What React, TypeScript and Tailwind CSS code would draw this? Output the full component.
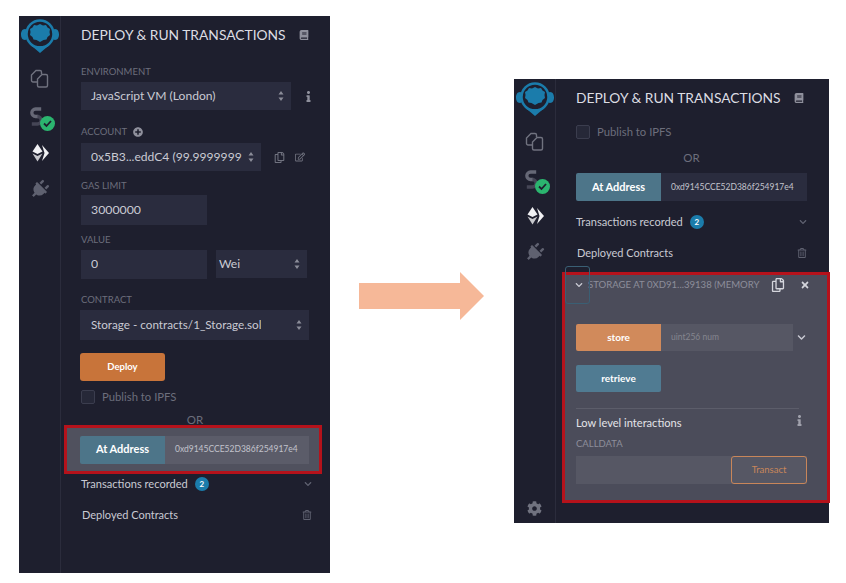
import { ReactNode } from "react";
import { FaBook, FaChevronDown, FaCog, FaInfo, FaPlug, FaPlusCircle, FaRegCopy, FaRegEdit, FaRegTrashAlt, FaTimes } from "react-icons/fa";

function Logo() {
  return (
    <svg width="38" height="34" viewBox="0 0 38 34">
      <circle cx="19" cy="15" r="13.500" fill="none" stroke="#1b7cab" strokeWidth="2.500" />
      <path d="M4 10C1 10 0 13 0 15.500S1 21 4 21c1.500 0 2-1 2-3v-5c0-2-.5-3-2-3zM34 10c3 0 4 3 4 5.500S37 21 34 21c-1.500 0-2-1-2-3v-5c0-2 .5-3 2-3z" fill="#1b7cab" />
      <path d="M19 5l3 1.500 3-.5 1.500 2.500 2.500 1.500-.5 3 .5 3-2.500 2-1 2.500-3 .5L19 23l-3.500-2-3-.5-1-2.500L9 16l.5-3-.5-3 2.500-1.500L13 6l3 .5z" fill="#1b7cab" />
      <path d="M9 25.500q10 3.500 20 0L19 34z" fill="#1b7cab" />
    </svg>
  );
}

function FilesIcon() {
  return (
    <svg width="19" height="19" viewBox="0 0 19 19" fill="none" stroke="#70727f" strokeWidth="1.400">
      <path d="M7 13H3a1.500 1.500 0 0 1-1.500-1.500V6L6 1.500h4A1.500 1.500 0 0 1 11.500 3v2" />
      <path d="M9 18a1.500 1.500 0 0 1-1.500-1.500V10L12 5.500h4A1.500 1.500 0 0 1 17.500 7v9.500A1.500 1.500 0 0 1 16 18z" />
    </svg>
  );
}

function CompileIcon() {
  return (
    <div className="relative w-[24px] h-[24px] mt-1">
      <svg width="15" height="21" viewBox="0 0 16 22" fill="none" strokeWidth="3.500" className="ml-[1px]">
        <path d="M13 3H7a4 4 0 0 0 0 8h3" stroke="#666876" />
        <path d="M3 19h6a4 4 0 0 0 0-8" stroke="#454656" />
      </svg>
      <div className="absolute right-[-3px] bottom-[-1px] w-[15px] h-[15px] rounded-full bg-[#2bb56f] flex items-center justify-center">
        <svg width="9" height="9" viewBox="0 0 9 9" fill="none" stroke="#1e1f2e" strokeWidth="1.800">
          <path d="M1 4.500l2.500 2.500L8 2" />
        </svg>
      </div>
    </div>
  );
}

function DeployIcon() {
  return (
    <svg width="18" height="18" viewBox="0 0 18 18" fill="#f1f1f4">
      <path d="M6.500 0l5 7.500-5 2.500-5-2.500z" />
      <path d="M1.500 9.500l5 2.500 5-2.500-5 8z" opacity=".8" />
      <path d="M11 1l7 8-7 8 2.500-8z" />
    </svg>
  );
}

function Sidebar({ gear }: { gear?: boolean }) {
  return (
    <div className="w-[42px] shrink-0 border-r border-[#2b2c3c] flex flex-col items-center">
      <div className="h-[38px] mt-[1px] flex items-center justify-center">
        <Logo />
      </div>
      <div className="mt-[5px] h-[37px] flex items-center justify-center"><FilesIcon /></div>
      <div className="h-[37px] flex items-center justify-center"><CompileIcon /></div>
      <div className="h-[37px] flex items-center justify-center"><DeployIcon /></div>
      <div className="h-[37px] flex items-center justify-center"><FaPlug className="text-[#5f6170] text-[19px] rotate-45" /></div>
      {gear && <FaCog className="mt-auto mb-[7px] text-[#70727f] text-[15px]" />}
    </div>
  );
}

function UpDown() {
  return (
    <svg width="6" height="10" viewBox="0 0 6 10" fill="#8b8d99">
      <path d="M3 0l2.500 3.500h-5zM3 10L.500 6.500h5z" />
    </svg>
  );
}

function Label({ children, className }: { children: ReactNode; className?: string }) {
  return <div className={"text-[9.500px] leading-[12px] uppercase text-[#6c6e7c] " + (className ?? "")}>{children}</div>;
}

function Field({ children, className, arrow }: { children: ReactNode; className?: string; arrow?: boolean }) {
  return (
    <div className={"bg-[#2a2c3e] text-[#c9cad3] flex items-center justify-between shrink-0 overflow-hidden " + (className ?? "")}>
      <span className="whitespace-nowrap overflow-hidden">{children}</span>
      {arrow && <span className="shrink-0 ml-1"><UpDown /></span>}
    </div>
  );
}

function Title() {
  return (
    <div className="flex items-center h-[20px] w-[228px] justify-between">
      <span className="text-[#dcdde3] text-[13.800px] whitespace-nowrap">DEPLOY &amp; RUN TRANSACTIONS</span>
      <FaBook className="text-[#8f909c] text-[10px]" />
    </div>
  );
}

function Publish({ className }: { className?: string }) {
  return (
    <div className={"flex items-center gap-[7px] h-[14px] " + (className ?? "")}>
      <div className="w-[14px] h-[14px] rounded-[2px] border border-[#3b3d4e] bg-[#262838]" />
      <span className="text-[11.300px] text-[#6c6e7c]">Publish to IPFS</span>
    </div>
  );
}

function AtAddress({ inputBg, width }: { inputBg: string; width: string }) {
  return (
    <div className={"flex h-[28px] shrink-0 " + width}>
      <div className="w-[85px] rounded-l-[2px] bg-[#4d7589] text-white text-[11px] font-bold flex items-center justify-center">At Address</div>
      <div className={"flex-1 flex items-center pl-[10px] text-[8.500px] text-[#c2c3cc] whitespace-nowrap overflow-hidden " + inputBg}>
        0xd9145CCE52D386f254917e4
      </div>
    </div>
  );
}

function Recorded({ width }: { width: string }) {
  return (
    <div className={"flex items-center justify-between h-[16px] " + width}>
      <div className="flex items-center gap-[7px]">
        <span className="text-[11.100px] text-[#c9cad3] whitespace-nowrap">Transactions recorded</span>
        <span className="w-[14px] h-[14px] rounded-full bg-[#1b7cab] text-white text-[8px] font-bold flex items-center justify-center">2</span>
      </div>
      <FaChevronDown className="text-[#5f6170] text-[8px]" />
    </div>
  );
}

function Deployed({ width }: { width: string }) {
  return (
    <div className={"flex items-center justify-between h-[16px] pl-[1px] " + width}>
      <span className="text-[11px] text-[#c9cad3] whitespace-nowrap">Deployed Contracts</span>
      <FaRegTrashAlt className="text-[#5f6170] text-[10px]" />
    </div>
  );
}

function LeftPanel() {
  return (
    <div className="w-[311px] h-[557px] bg-[#1e1f2e] flex shrink-0">
      <Sidebar />
      <div className="flex flex-col pl-[20px] pt-[9px] min-w-0">
        <Title />
        <Label className="mt-[21px]">Environment</Label>
        <div className="flex items-center mt-[4px]">
          <Field arrow className="w-[210px] h-[28px] pl-[10px] pr-[7px] text-[12.100px]">JavaScript VM (London)</Field>
          <FaInfo className="ml-[12px] text-[#8f909c] text-[11px]" />
        </div>
        <Label className="mt-[16px] flex items-center gap-[6px]">
          Account <FaPlusCircle className="text-[#8f909c] text-[10px]" />
        </Label>
        <div className="flex items-center mt-[5px]">
          <Field arrow className="w-[180px] h-[28px] pl-[10px] pr-[7px] text-[12.100px]">0x5B3...eddC4 (99.9999999</Field>
          <FaRegCopy className="ml-[13px] text-[#70727f] text-[11px]" />
          <FaRegEdit className="ml-[10px] text-[#70727f] text-[10px]" />
        </div>
        <Label className="mt-[9px]">Gas limit</Label>
        <Field className="w-[126px] h-[30px] mt-[3px] pl-[10px] text-[12.300px]">3000000</Field>
        <Label className="mt-[9px]">Value</Label>
        <div className="flex mt-[4px] gap-[9px]">
          <Field className="w-[126px] h-[29px] pl-[10px] text-[12.300px]">0</Field>
          <Field arrow className="w-[91px] h-[28px] pl-[3px] pr-[7px] text-[12.100px]">Wei</Field>
        </div>
        <Label className="mt-[15px]">Contract</Label>
        <Field arrow className="w-[229px] h-[30px] mt-[4px] pl-[11px] pr-[7px] -ml-[1px] text-[11.700px]">Storage - contracts/1_Storage.sol</Field>
        <button className="w-[85px] h-[28px] mt-[13px] -ml-[1px] rounded-[3px] bg-[#c8743a] text-white text-[9.500px] font-bold">Deploy</button>
        <Publish className="mt-[9px]" />
        <div className="text-center w-[228px] text-[11.500px] leading-[14px] text-[#6c6e7c] mt-[9px]">OR</div>
        <div className="w-[258px] h-[49px] -ml-[17px] mt-[-2px] bg-[#50515e] border-[3px] border-[#b5121b] flex items-center pl-[13px]">
          <AtAddress inputBg="bg-[#5b5c69]" width="w-[229px]" />
        </div>
        <Recorded width="w-[231px] mt-[2px]" />
        <Deployed width="w-[231px] mt-[15px]" />
      </div>
    </div>
  );
}

function RightPanel() {
  return (
    <div className="w-[315px] h-[444px] mt-[63px] bg-[#1e1f2e] flex shrink-0">
      <Sidebar gear />
      <div className="flex flex-col pl-[20px] pt-[9px] min-w-0">
        <Title />
        <Publish className="mt-[17px]" />
        <div className="text-center w-[231px] text-[11.500px] leading-[14px] text-[#6c6e7c] mt-[12px]">OR</div>
        <AtAddress inputBg="bg-[#2a2c3e]" width="w-[231px] mt-[8px]" />
        <Recorded width="w-[231px] mt-[13px]" />
        <Deployed width="w-[231px] mt-[15px]" />
        <div className="relative w-[268px] h-[231px] -ml-[14px] mt-[11px] bg-[#4b4c5a] border-[3px] border-[#b5121b] flex flex-col pl-[11px]">
          <div className="absolute left-0 top-[-9px] w-[25px] h-[38px] rounded-[3px] border border-[#3a5f74]" />
          <div className="flex items-center h-[18px] mt-[1px] -ml-[1px]">
            <FaChevronDown className="text-[#c9cad3] text-[8px]" />
            <span className="ml-[5px] w-[170px] text-[9.600px] text-[#8d8e9b] whitespace-nowrap">STORAGE AT 0XD91...39138 (MEMORY</span>
            <FaRegCopy className="ml-[13px] text-[#d4d5dc] text-[14px]" />
            <FaTimes className="ml-[15px] text-[#d4d5dc] text-[10px]" />
          </div>
          <div className="flex items-center mt-[30px]">
            <div className="w-[85px] h-[27px] rounded-l-[2px] bg-[#d18a5b] text-white text-[10px] font-bold flex items-center justify-center">store</div>
            <div className="w-[132px] h-[27px] bg-[#565764] text-[#85868f] text-[8.500px] pl-[10px] flex items-center">uint256 num</div>
            <FaChevronDown className="ml-[3px] text-[#c9cad3] text-[9px] translate-x-[1px]" />
          </div>
          <div className="w-[85px] h-[27px] mt-[14px] rounded-[2px] bg-[#507b92] text-white text-[10px] font-bold flex items-center justify-center">retrieve</div>
          <div className="w-[223px] h-px bg-[#5c5d6a] mt-[16px]" />
          <div className="flex items-center justify-between w-[229px] h-[16px] mt-[6px]">
            <span className="text-[11.100px] text-[#e3e3e8]">Low level interactions</span>
            <FaInfo className="text-[#a0a1ac] text-[11px] -translate-y-[3px]" />
          </div>
          <div className="text-[9.500px] leading-[12px] text-[#8d8e9b] mt-[7px]">CALLDATA</div>
          <div className="flex justify-end w-[231px] h-[28px] mt-[6px] bg-[#565764]">
            <div className="w-[76px] rounded-[3px] border border-[#c8865a] text-[#c8865a] text-[9.500px] flex items-center justify-center">Transact</div>
          </div>
        </div>
      </div>
    </div>
  );
}

export default function App() {
  return (
    <div className="w-[846px] h-[583px] bg-white overflow-hidden flex items-start pl-[19px] pt-[16px] font-['Lato',sans-serif]">
      <LeftPanel />
      <svg width="125" height="48" viewBox="0 0 125 48" className="ml-[29px] mr-[30px] mt-[256px] shrink-0">
        <path d="M0 11h101V0l24 24-24 24V37H0z" fill="#f6b898" />
      </svg>
      <RightPanel />
    </div>
  );
}
